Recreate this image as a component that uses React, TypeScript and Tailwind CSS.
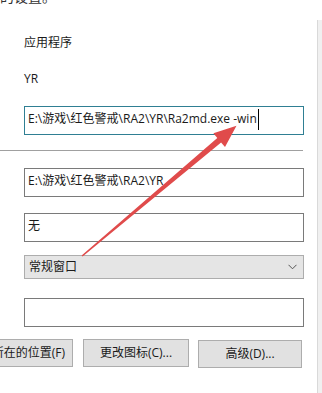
const font = "font-['Open_Sans','Noto_Sans_CJK_SC',sans-serif]";

function Field({ value, focused = false }: { value: string; focused?: boolean }) {
  return (
    <div
      className={`flex h-[29px] w-[280px] items-start bg-white pl-[3px] pt-[4px] text-[12px] leading-[16px] text-[#1a1a1a] ${
        focused ? "border border-[#2f7f93]" : "border border-[#7a7a7a]"
      }`}
    >
      <span className="whitespace-nowrap">{value}</span>
      {focused && <span className="ml-px mt-[-2px] h-[21px] w-px bg-black" />}
    </div>
  );
}

function Button({ children, className = "" }: { children: React.ReactNode; className?: string }) {
  return (
    <div
      className={`flex h-[28px] items-center justify-center border border-[#adadad] bg-[#e1e1e1] text-[12px] text-[#1a1a1a] ${className}`}
    >
      {children}
    </div>
  );
}

function Arrow() {
  return (
    <svg className="pointer-events-none absolute left-0 top-0" width="322" height="393" viewBox="0 0 322 393">
      <polygon
        points="82.6,256.4 221.1,142.5 225.0,147.1 236.5,125.8 213.4,133.3 217.3,137.9 81.6,255.4"
        fill="#e04b4b"
      />
    </svg>
  );
}

export default function App() {
  return (
    <div className={`relative flex h-[393px] w-[322px] overflow-hidden bg-white ${font}`}>
      <div className="flex w-[317px] flex-col">
        <div className="h-[6px] overflow-hidden">
          <div className="mt-[-12px] text-[14px] leading-[18px] text-[#333]">的设置。</div>
        </div>

        <div className="flex flex-col pl-[24px]">
          <div className="mt-[29px] text-[12px] leading-[16px] text-[#1a1a1a]">应用程序</div>
          <div className="mt-[20px] text-[12px] leading-[16px] text-[#1a1a1a]">YR</div>
          <div className="mt-[19px]">
            <Field value="E:\游戏\红色警戒\RA2\YR\Ra2md.exe -win" focused />
          </div>
        </div>

        <div className="mt-[15px] h-px w-[303px] bg-[#a0a0a0]" />

        <div className="flex flex-col pl-[24px]">
          <div className="mt-[17px]">
            <Field value="E:\游戏\红色警戒\RA2\YR" />
          </div>
          <div className="mt-[16px]">
            <Field value="无" />
          </div>
          <div className="mt-[13px] flex h-[24px] w-[280px] items-center justify-between border border-[#adadad] bg-[#e5e5e5] pl-[4px] pr-[6px] text-[12px] text-[#1a1a1a]">
            <span>常规窗口</span>
            <svg width="9" height="6" viewBox="0 0 9 6">
              <path d="M0.5 0.8 L4.5 4.8 L8.5 0.8" fill="none" stroke="#555" strokeWidth="1" />
            </svg>
          </div>
          <div className="mt-[19px]">
            <Field value="" />
          </div>
        </div>

        <div className="mt-[12px] flex items-start">
          <Button className="ml-[-40px] w-[113px] justify-end overflow-hidden whitespace-nowrap pr-[7px]">
            打开文件所在的位置(F)
          </Button>
          <Button className="ml-[10px] w-[106px]">更改图标(C)...</Button>
          <Button className="ml-[9px] mt-px w-[104px]">高级(D)...</Button>
        </div>
      </div>

      <div className="mt-[20px] flex-1 border-l border-[#d9d9d9] bg-[#f0f0f0]" />

      <Arrow />
    </div>
  );
}
